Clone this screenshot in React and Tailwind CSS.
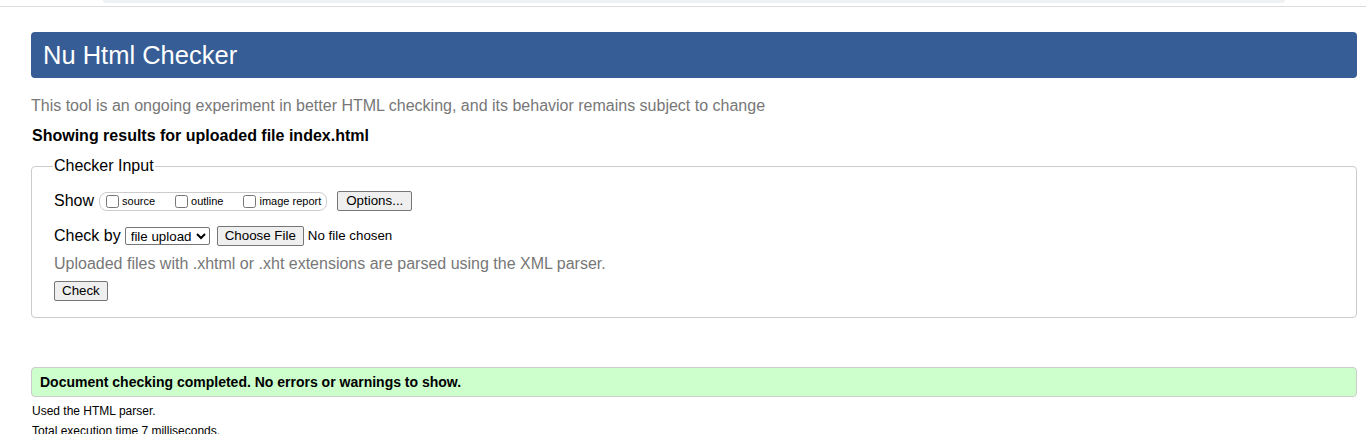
import React from "react";

const btn =
  "border border-[#767676] bg-[#efefef] rounded-[2px] text-[13.33px] leading-none text-black";

const box = "m-[3px_3px_3px_4px] w-[13px] h-[13px]";

export default function App() {
  return (
    <div className="min-h-[434px] bg-white text-black" style={{ fontFamily: '"Liberation Sans", Arial, sans-serif' }}>
      {/* browser chrome remnant */}
      <div className="h-[7px] border-b border-[#dcdcdc]">
        <div className="ml-[103px] mr-[81px] h-[3px] bg-[#eff2f4] rounded-b-[6px]" />
      </div>

      <div className="pl-[31px] pr-[9px] pt-[25px]">
        <h1 className="h-[46px] bg-[#365d95] rounded-[4px] text-white text-[25.5px] flex items-center pl-[12px]">
          Nu Html Checker
        </h1>

        <p className="mt-[19px] text-[16px] leading-[18px] text-[#777]">
          This tool is an ongoing experiment in better HTML checking, and its behavior remains subject to change
        </p>

        <p className="mt-[12px] text-[16px] leading-[18px] font-bold pl-[1px]">
          Showing results for uploaded file index.html
        </p>

        <fieldset className="mt-[12px] border border-[#ccc] rounded-[4px] px-[22px] pb-[15px] pt-0">
          <legend className="text-[16px] leading-[18px] px-[1px] -ml-[1px]">Checker Input</legend>

          <div className="flex items-center mt-[16px] h-[20px]">
            <span className="text-[16px]">Show</span>
            <div className="ml-[5px] h-[19px] border border-[#ccc] rounded-[8px] flex items-center pl-[2px] pr-[5px] text-[11px]">
              <label className="flex items-center">
                <input type="checkbox" className={box} />
                <span>source</span>
              </label>
              <label className="flex items-center ml-[16px]">
                <input type="checkbox" className={box} />
                <span>outline</span>
              </label>
              <label className="flex items-center ml-[16px]">
                <input type="checkbox" className={box} />
                <span>image report</span>
              </label>
            </div>
            <button className={btn + " ml-[10px] h-[20px] px-[8px]"}>Options...</button>
          </div>

          <div className="flex items-center mt-[15px] h-[20px]">
            <span className="text-[16px]">Check by</span>
            <select className="ml-[4px] h-[18px] border border-[#767676] rounded-[2px] text-[13.33px] leading-none bg-white px-[1px]" defaultValue="file">
              <option value="file">file upload</option>
              <option value="address">address</option>
              <option value="text">text input</option>
            </select>
            <button className={btn + " ml-[7px] h-[20px] px-[7px]"}>Choose File</button>
            <span className="ml-[4px] text-[13.33px]">No file chosen</span>
          </div>

          <p className="mt-[9px] text-[16px] leading-[18px] text-[#777]">
            Uploaded files with .xhtml or .xht extensions are parsed using the XML parser.
          </p>

          <button className={btn + " mt-[8px] h-[20px] px-[7px]"}>Check</button>
        </fieldset>

        <div className="mt-[49px] h-[30px] bg-[#ccffcc] border border-[#ccc] rounded-[4px] flex items-center pl-[8px] text-[14px] font-bold">
          Document checking completed. No errors or warnings to show.
        </div>

        <p className="mt-[7px] text-[12px] leading-[14px] pl-[1px]">Used the HTML parser.</p>
        <p className="mt-[6px] text-[12px] leading-[14px] pl-[1px]">Total execution time 7 milliseconds.</p>
      </div>
    </div>
  );
}
